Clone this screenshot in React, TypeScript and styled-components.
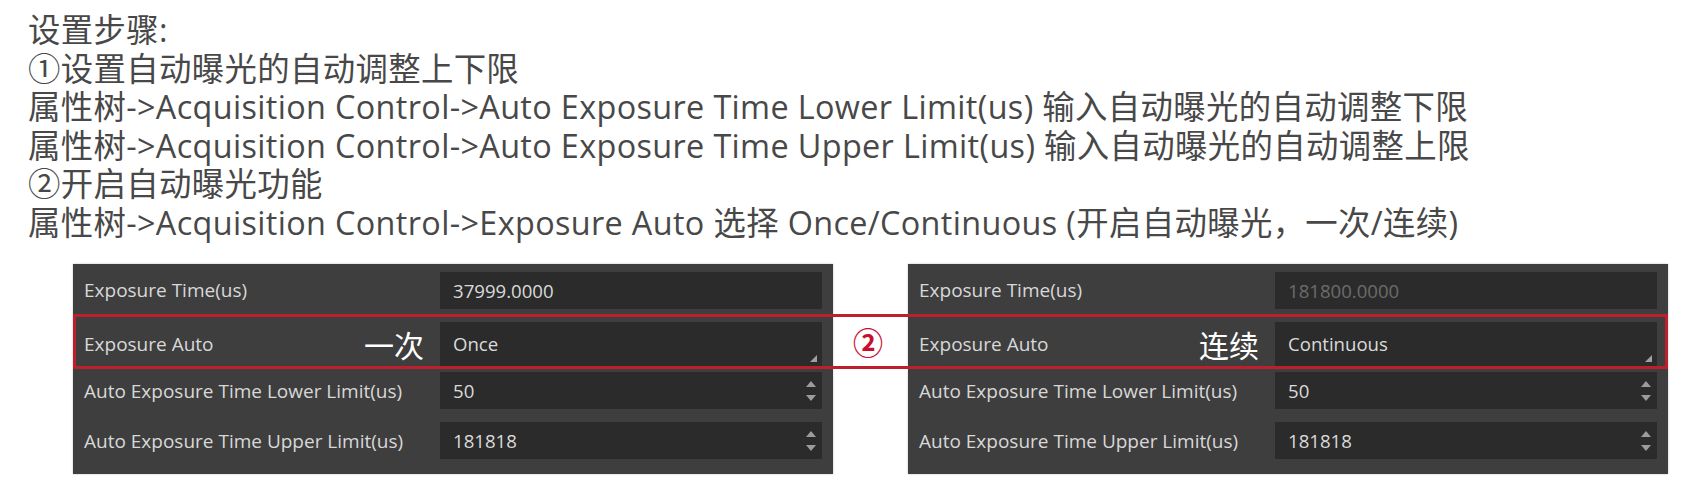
import React from 'react'
import styled, { createGlobalStyle } from 'styled-components'

const GlobalStyle = createGlobalStyle`
  body {
    margin: 0;
    background: #ffffff;
  }
`

const Page = styled.div`
  width: 1704px;
  height: 500px;
  overflow: hidden;
  padding-top: 10px;
  box-sizing: border-box;
`

const Steps = styled.div`
  padding-left: 28px;
  font-family: "Open Sans", "Noto Sans CJK SC", sans-serif;
  font-size: 32.4px;
  letter-spacing: 0.35px;
  line-height: 38.6px;
  color: #484848;
  white-space: nowrap;
`

const PanelsRow = styled.div`
  position: relative;
  display: flex;
  gap: 75px;
  padding-left: 73px;
  margin-top: 22px;
`

const Panel = styled.div`
  width: 760px;
  box-sizing: border-box;
  background: #3e3e3e;
  padding: 8px 11px 15px;
  display: flex;
  flex-direction: column;
  gap: 13.3px;
  box-shadow: 0 0 2px rgba(0, 0, 0, 0.25);
`

const Row = styled.div`
  display: grid;
  grid-template-columns: 356px 1fr;
  height: 37px;
`

const Label = styled.div`
  display: flex;
  align-items: center;
  justify-content: space-between;
  padding-right: 16px;
  font-family: "Open Sans", "Noto Sans CJK SC", sans-serif;
  font-size: 19px;
  color: #d8d8d8;
`

const Note = styled.span`
  font-family: "Noto Sans CJK SC", sans-serif;
  font-size: 30px;
  color: #ffffff;
`

const Field = styled.div<{ $dim?: boolean }>`
  display: flex;
  align-items: center;
  justify-content: space-between;
  background: #2b2b2b;
  padding-left: 13px;
  font-family: "Open Sans", "Noto Sans CJK SC", sans-serif;
  font-size: 18.6px;
  color: ${(p) => (p.$dim ? '#6c6c6c' : '#dadada')};
`

const Spin = styled.svg`
  width: 12px;
  height: 28px;
  margin-right: 5px;
`

const Grip = styled.svg`
  width: 7px;
  height: 7px;
  align-self: flex-end;
  margin: 0 5px 4px 0;
`

const Highlight = styled.div`
  position: absolute;
  left: 73px;
  top: 50px;
  width: 1595px;
  height: 55px;
  box-sizing: border-box;
  border: 3px solid #bd202c;
  display: flex;
  align-items: center;
  padding-left: 777px;
  pointer-events: none;
`

const Mark = styled.span`
  width: 30px;
  text-align: center;
  font-family: "Noto Sans CJK SC", sans-serif;
  font-weight: 700;
  font-size: 30px;
  line-height: 30px;
  color: #c8102e;
`

type Item = {
  label: string
  value: string
  note?: string
  kind?: 'combo' | 'spin'
  dim?: boolean
}

const SpinArrows = () => (
  <Spin viewBox="0 0 12 28">
    <polygon points="6,4 11,10 1,10" fill="#9c9c9c" />
    <polygon points="1,18 11,18 6,24" fill="#9c9c9c" />
  </Spin>
)

const ComboGrip = () => (
  <Grip viewBox="0 0 7 7">
    <polygon points="7,0 7,7 0,7" fill="#a0a0a0" />
  </Grip>
)

const PropPanel = ({ items }: { items: Item[] }) => (
  <Panel>
    {items.map((it) => (
      <Row key={it.label}>
        <Label>
          <span>{it.label}</span>
          {it.note && <Note>{it.note}</Note>}
        </Label>
        <Field $dim={it.dim}>
          <span>{it.value}</span>
          {it.kind === 'spin' && <SpinArrows />}
          {it.kind === 'combo' && <ComboGrip />}
        </Field>
      </Row>
    ))}
  </Panel>
)

const leftItems: Item[] = [
  { label: 'Exposure Time(us)', value: '37999.0000' },
  { label: 'Exposure Auto', value: 'Once', note: '一次', kind: 'combo' },
  { label: 'Auto Exposure Time Lower Limit(us)', value: '50', kind: 'spin' },
  { label: 'Auto Exposure Time Upper Limit(us)', value: '181818', kind: 'spin' },
]

const rightItems: Item[] = [
  { label: 'Exposure Time(us)', value: '181800.0000', dim: true },
  { label: 'Exposure Auto', value: 'Continuous', note: '连续', kind: 'combo' },
  { label: 'Auto Exposure Time Lower Limit(us)', value: '50', kind: 'spin' },
  { label: 'Auto Exposure Time Upper Limit(us)', value: '181818', kind: 'spin' },
]

export default function App() {
  return (
    <Page>
      <GlobalStyle />
      <Steps>
        <div>设置步骤:</div>
        <div>①设置自动曝光的自动调整上下限</div>
        <div>属性树-&gt;Acquisition Control-&gt;Auto Exposure Time Lower Limit(us) 输入自动曝光的自动调整下限</div>
        <div>属性树-&gt;Acquisition Control-&gt;Auto Exposure Time Upper Limit(us) 输入自动曝光的自动调整上限</div>
        <div>②开启自动曝光功能</div>
        <div>属性树-&gt;Acquisition Control-&gt;Exposure Auto 选择 Once/Continuous (开启自动曝光，一次/连续)</div>
      </Steps>
      <PanelsRow>
        <PropPanel items={leftItems} />
        <PropPanel items={rightItems} />
        <Highlight>
          <Mark>②</Mark>
        </Highlight>
      </PanelsRow>
    </Page>
  )
}
